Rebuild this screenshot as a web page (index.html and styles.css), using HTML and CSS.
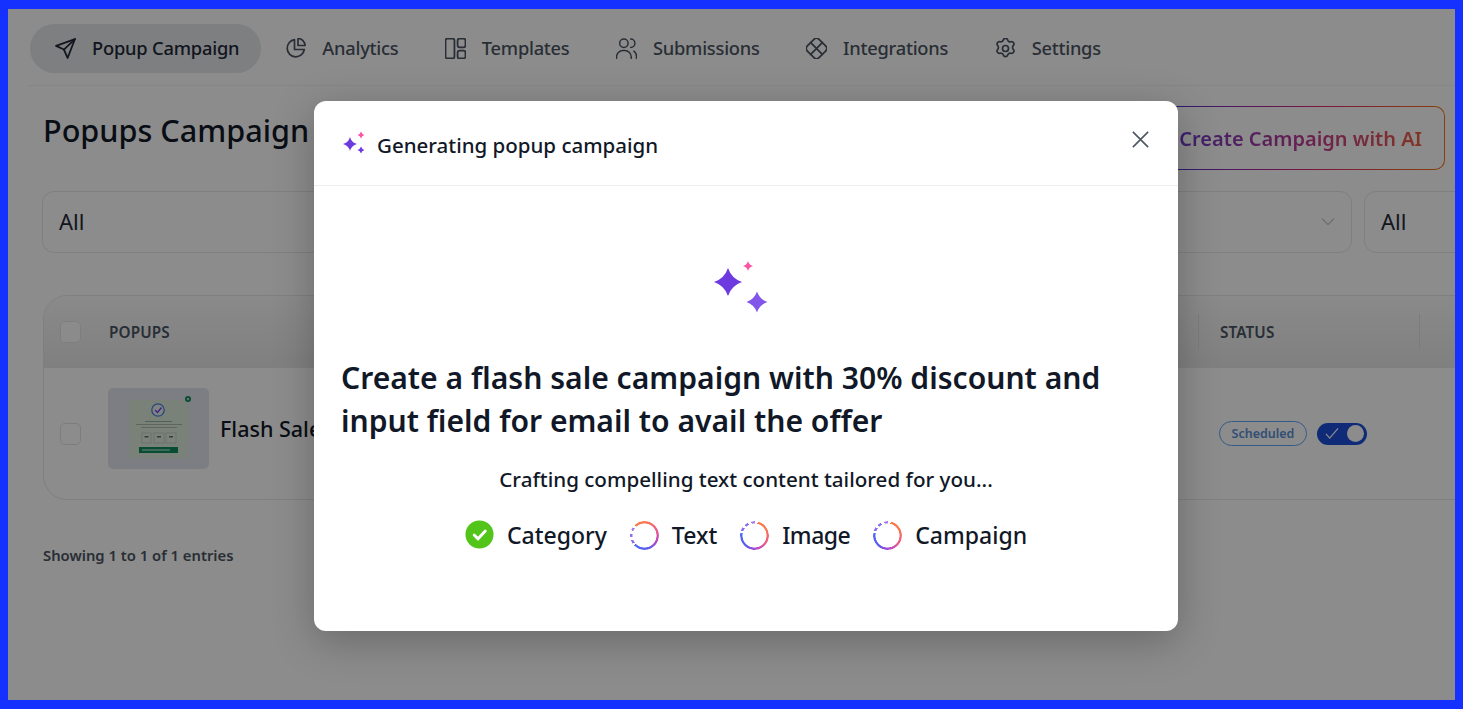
FILE: index.html
```html
<!DOCTYPE html>
<html lang="en">
<head>
<meta charset="utf-8">
<title>Popups Campaign</title>
<link rel="stylesheet" href="styles.css">
</head>
<body>
<div class="frame">
  <div class="page">
    <nav class="nav">
      <a class="nav-item active"><svg class="nav-icon" viewBox="2 2 20 20"><path d="M21 3 3 9.500l7.500 3.500 3.500 8z"/><path d="m21 3-10.500 10"/></svg><span>Popup Campaign</span></a>
      <a class="nav-item"><svg class="nav-icon" viewBox="1 2.500 21 21"><path d="M10.500 4.200a8.600 8.600 0 1 0 9.800 9.800h-9.800z"/><path d="M14 3a7 7 0 0 1 7 7h-7z"/></svg><span>Analytics</span></a>
      <a class="nav-item"><svg class="nav-icon" viewBox="2 2 20 20"><rect x="2.500" y="2.500" width="8.500" height="19" rx="2"/><rect x="14" y="2.500" width="7.500" height="8.500" rx="2"/><rect x="14" y="14" width="7.500" height="7.500" rx="2"/></svg><span>Templates</span></a>
      <a class="nav-item"><svg class="nav-icon thin" viewBox="2 2 20 20"><circle cx="9.500" cy="7" r="4"/><path d="M2.500 21.500V20a6 6 0 0 1 6-6h2a6 6 0 0 1 6 6v1.500"/><path d="M16 3a4 4 0 0 1 0 8"/><path d="M19 14.500a6 6 0 0 1 2.500 5.500v1.500"/></svg><span>Submissions</span></a>
      <a class="nav-item"><svg class="nav-icon" viewBox="2 2 20 20"><path d="M9.600 3.300a3.400 3.400 0 0 1 4.800 0l6.300 6.300a3.400 3.400 0 0 1 0 4.800l-6.300 6.300a3.400 3.400 0 0 1-4.800 0l-6.300-6.300a3.400 3.400 0 0 1 0-4.800z"/><path d="m6.500 6.500 11 11M17.500 6.500l-11 11"/></svg><span>Integrations</span></a>
      <a class="nav-item"><svg class="nav-icon" viewBox="2.500 1.500 19 21"><path d="M9.800 3.500a2.300 2.300 0 0 1 4.400 0c.4 1.400 1.900 2.200 3.300 1.800a2.300 2.300 0 0 1 2.300 3.800c-1 1-1 2.800 0 3.800a2.300 2.300 0 0 1-2.300 3.800c-1.400-.4-2.900.4-3.300 1.800a2.300 2.300 0 0 1-4.400 0c-.4-1.400-1.900-2.200-3.300-1.800a2.300 2.300 0 0 1-2.300-3.800c1-1 1-2.800 0-3.800a2.300 2.300 0 0 1 2.300-3.800c1.400.4 2.900-.4 3.300-1.800z"/><circle cx="12" cy="12" r="3"/></svg><span>Settings</span></a>
    </nav>
    <main class="main">
      <header class="head">
        <h1 class="title">Popups Campaign</h1>
        <button class="ai-button"><span class="ai-text">Create Campaign with AI</span></button>
      </header>
      <div class="filters">
        <div class="select sel-a">All</div>
        <div class="select sel-b"><svg class="chev" viewBox="0 0 16 10"><path d="m1 1.500 7 7 7-7"/></svg></div>
        <div class="select sel-c">All</div>
      </div>
      <section class="table">
        <div class="row thead">
          <div class="cell-check"><span class="box"></span></div>
          <div class="cell-main th">POPUPS</div>
          <div class="cell-status th">STATUS</div>
          <div class="cell-end"></div>
        </div>
        <div class="row tbody">
          <div class="cell-check"><span class="box"></span></div>
          <div class="cell-main raised">
            <svg class="thumb" viewBox="0 0 101 81">
              <rect width="101" height="81" rx="5" fill="#e3e6ef"/>
              <rect x="21" y="12" width="60" height="58" fill="#dcecdc"/>
              <circle cx="80" cy="11" r="3" fill="#0f8a5f"/>
              <circle cx="80" cy="11" r="1.300" fill="#a5d6bf"/>
              <circle cx="50" cy="22" r="6.200" fill="#e8f0ee" stroke="#4a7fe0" stroke-width="1.300"/>
              <path d="m47 22 2.500 2.500 4-5" fill="none" stroke="#7c3aed" stroke-width="1.300"/>
              <rect x="37" y="33" width="27" height="1" fill="#8fb09f"/>
              <rect x="28" y="36" width="46" height="1" fill="#a9bba9"/>
              <rect x="33" y="39" width="36" height="1" fill="#a9bba9"/>
              <rect x="34" y="45" width="9" height="10" fill="#e2ebe2" stroke="#b5c6b5" stroke-width=".6"/>
              <rect x="46" y="45" width="10" height="10" fill="#e2ebe2" stroke="#b5c6b5" stroke-width=".6"/>
              <rect x="58" y="45" width="10" height="10" fill="#e2ebe2" stroke="#b5c6b5" stroke-width=".6"/>
              <rect x="36.500" y="48" width="4" height="1.500" fill="#5f6f6a"/>
              <rect x="49" y="48" width="4" height="1.500" fill="#5f6f6a"/>
              <rect x="61" y="48" width="4" height="1.500" fill="#5f6f6a"/>
              <rect x="31" y="59" width="39" height="6" fill="#0f8a5f"/>
              <rect x="34" y="61.500" width="28" height="1" fill="#d5f0e2"/>
            </svg>
            <span class="name">Flash Sale</span>
          </div>
          <div class="cell-status status-line">
            <span class="badge">Scheduled</span>
            <span class="toggle"><svg class="tick" viewBox="0 0 16 14"><path d="m1.500 7.500 4 4.500 9-10.500"/></svg><span class="knob"></span></span>
          </div>
          <div class="cell-end"></div>
        </div>
      </section>
      <p class="entries">Showing 1 to 1 of 1 entries</p>
    </main>
  </div>

  <div class="overlay">
    <div class="modal">
      <div class="modal-head">
        <svg class="spark-small" viewBox="0 0 26 24">
          <path class="s-purple" d="M9 6Q10.500 11.500 16 13 10.500 14.500 9 20 7.500 14.500 2 13 7.500 11.500 9 6z"/>
          <path class="s-pink" d="M20 .500Q20.800 3.200 23.500 4 20.800 4.800 20 7.500 19.200 4.800 16.500 4 19.200 3.200 20 .500z"/>
          <path class="s-purple" d="M20 15.500Q20.800 18.200 23.500 19 20.800 19.800 20 22.500 19.200 19.800 16.500 19 19.200 18.200 20 15.500z"/>
        </svg>
        <h2 class="modal-title">Generating popup campaign</h2>
        <svg class="close" viewBox="0 0 20 20"><path d="m2 2 16 16M18 2 2 18"/></svg>
      </div>
      <div class="modal-body">
        <svg class="spark-big" viewBox="0 0 56 54">
          <path class="s-purple" d="M15 8Q18.500 18.500 29 22 18.500 25.500 15 36 11.500 25.500 1 22 11.500 18.500 15 8z"/>
          <path class="s-pink" d="M35 1Q36 5 40 6 36 7 35 11 34 7 30 6 34 5 35 1z"/>
          <path class="s-violet" d="M44 31.500Q46.700 39.300 54.500 42 46.700 44.700 44 52.500 41.300 44.700 33.500 42 41.300 39.300 44 31.500z"/>
        </svg>
        <h3 class="prompt">Create a flash sale campaign with 30% discount and input field for email to avail the offer</h3>
        <p class="crafting">Crafting compelling text content tailored for you...</p>
        <div class="steps">
          <div class="step"><svg class="done" viewBox="0 0 30 30"><circle cx="15" cy="15" r="14.500"/><path d="m9.500 15.500 4 4 7.500-8"/></svg><span>Category</span></div>
          <div class="step"><span class="ring"></span><span>Text</span></div>
          <div class="step"><span class="ring turned"></span><span class="tight">Image</span></div>
          <div class="step"><span class="ring turned"></span><span>Campaign</span></div>
        </div>
      </div>
    </div>
  </div>
</div>
</body>
</html>
```
FILE: styles.css
```css
* { box-sizing: border-box; }
html, body { margin: 0; padding: 0; height: 100%; overflow: hidden; background: #1431ff; }
body { font-family: "Noto Sans", "Open Sans", sans-serif; color: #111827; }
.frame { position: relative; height: 709px; border: solid #1431ff; border-width: 9px 8px; background: #fff; overflow: hidden; }
.page { padding-top: 15px; width: 1600px; }
.nav { display: flex; align-items: center; width: 1427px; margin-left: 20px; padding: 0 2px 12px; border-bottom: 1px solid #f3f4f6; }
.nav-item { display: flex; align-items: center; gap: 16px; height: 49px; padding: 0 22.500px 0 24px; border-radius: 25px; color: #4b5563; font-size: 18.300px; font-weight: 500; letter-spacing: -.25px; white-space: nowrap; }
.nav-item span { padding-bottom: 2px; }
.nav-item.active { padding: 0 22px 0 25px; background: #e5e7eb; color: #1f2937; letter-spacing: -.2px; }
.nav-icon { width: 21px; height: 21px; flex: none; fill: none; stroke: currentColor; stroke-width: 1.700; stroke-linejoin: round; stroke-linecap: round; }
.nav-icon.thin { stroke-width: 1.400; }
.main { padding-left: 35px; }
.head { display: flex; align-items: center; justify-content: space-between; width: 1402px; margin-top: 20px; height: 64px; }
.title { margin: 0 0 17px; font-size: 30.600px; font-weight: 500; line-height: 50px; color: #111827; }
.ai-button { display: flex; align-items: center; height: 64px; padding: 0 22px 0 50px; border: 1.500px solid transparent; border-radius: 10px; background: linear-gradient(#fff, #fff) padding-box, linear-gradient(90deg, #4f2fd0 14%, #db2777 58%, #f97316) border-box; font-family: inherit; font-size: 20px; font-weight: 600; }
.ai-text { background: linear-gradient(90deg, #6d3cc8, #c23c90 55%, #ef5f45); -webkit-background-clip: text; background-clip: text; color: transparent; white-space: nowrap; }
.filters { display: flex; gap: 12px; margin-top: 21px; margin-left: -1px; }
.select { display: flex; flex: none; align-items: center; justify-content: space-between; height: 62px; padding: 0 16px 2px; border: 1px solid #e5e7eb; border-radius: 12px; font-size: 22px; color: #1f2937; }
.sel-a { width: 648px; }
.sel-b { width: 650px; justify-content: flex-end; }
.sel-c { width: 300px; }
.chev { width: 14px; height: 9px; fill: none; stroke: #c9ccd1; stroke-width: 1.500; }
.table { width: 1550px; margin-top: 42px; border: 1px solid #e5e7eb; border-radius: 24px; overflow: hidden; }
.row { display: grid; grid-template-columns: 65px 1089px 222px 1fr; align-items: center; }
.thead { height: 72px; background: linear-gradient(#fbfbfb, #e9e9e9); }
.tbody { height: 131px; }
.cell-check { display: flex; padding-left: 16px; }
.box { width: 21px; height: 22px; border: 1.500px solid #e2e4e8; border-radius: 5px; background: #fff; }
.thead .box { opacity: .9; }
.cell-main { display: flex; align-items: center; gap: 11px; }
.cell-main.raised { margin-bottom: 10px; }
.th { font-size: 15.300px; font-weight: 600; color: #4b5563; letter-spacing: .1px; }
.thead .cell-status { align-self: stretch; display: flex; align-items: center; margin: 18px 0; border-left: 1px solid #e2e2e2; border-right: 1px solid #e2e2e2; }
.cell-status { padding-left: 21px; }
.thumb { width: 101px; height: 81px; flex: none; margin-left: -1px; }
.name { font-size: 21.500px; font-weight: 500; color: #111827; white-space: nowrap; }
.status-line { display: flex; align-items: center; gap: 10px; }
.badge { display: flex; align-items: center; justify-content: center; width: 88px; height: 25px; border: 1px solid #60a5fa; border-radius: 13px; font-size: 12.500px; font-weight: 600; color: #5b8fd6; }
.toggle { display: flex; align-items: center; justify-content: space-between; width: 50px; height: 22px; padding: 0 3px 0 7px; border-radius: 11px; background: #1d4ed8; }
.tick { width: 16px; height: 13px; fill: none; stroke: #fff; stroke-width: 1.300; }
.knob { width: 17px; height: 17px; border-radius: 50%; background: #fff; }
.entries { margin: 45px 0 0; font-size: 14.800px; font-weight: 600; color: #4b5563; }
.overlay { position: absolute; inset: 0; display: flex; background: rgba(0, 0, 0, .45); }
.modal { position: absolute; left: 306px; top: 92px; width: 864px; height: 530px; border-radius: 12px; background: #fff; box-shadow: 0 10px 40px rgba(0, 0, 0, .25); }
.modal-head { display: flex; align-items: center; height: 85px; padding: 6px 28px 0 27px; border-bottom: 1px solid #eceef1; }
.spark-small { width: 26px; height: 24px; flex: none; margin-top: -7px; }
.s-purple { fill: #6d3ae0; }
.s-pink { fill: #f857a6; }
.s-violet { fill: #8356ea; }
.modal-title { flex: 1; margin: 0 0 2px 10px; font-size: 20.500px; font-weight: 500; color: #111827; }
.close { width: 19px; height: 19px; flex: none; margin-top: -14px; fill: none; stroke: #4b5563; stroke-width: 1.700; }
.modal-body { display: flex; flex-direction: column; align-items: center; padding: 74px 27px 0; }
.spark-big { width: 56px; height: 54px; flex: none; margin-right: 10px; }
.prompt { align-self: stretch; margin: 42px 0 0; font-size: 30.100px; font-weight: 600; line-height: 43px; color: #111827; }
.crafting { margin: 19px 0 0; font-size: 20.600px; font-weight: 500; line-height: 36px; color: #111827; }
.steps { display: flex; align-items: center; gap: 23px; margin-top: 22px; font-size: 23px; font-weight: 500; color: #111827; }
.step { display: flex; align-items: center; gap: 13px; }
.tight { letter-spacing: -.5px; }
.done { width: 29px; height: 29px; flex: none; margin-top: -2px; }
.done circle { fill: #52c41a; }
.done path { fill: none; stroke: #fff; stroke-width: 3; stroke-linecap: round; stroke-linejoin: round; }
.ring { display: block; width: 29px; height: 29px; flex: none; border-radius: 50%; background: conic-gradient(#fb7a4b 0deg, #ee5a8a 70deg, #b748cc 115deg, #5b5cf0 165deg, #4f6cf5 225deg, #fff 225deg, #fff 234deg, #8b6cf0 234deg, #8b6cf0 250deg, #fff 250deg, #fff 262deg, #8b6cf0 262deg, #8b6cf0 278deg, #fff 278deg, #fff 292deg, #a77ae8 292deg, #a77ae8 305deg, #fff 305deg, #fff 318deg, #fb7a4b 318deg); -webkit-mask: radial-gradient(closest-side, transparent 81%, #000 85%); mask: radial-gradient(closest-side, transparent 81%, #000 85%); }
.ring.turned { transform: rotate(55deg); }
```
